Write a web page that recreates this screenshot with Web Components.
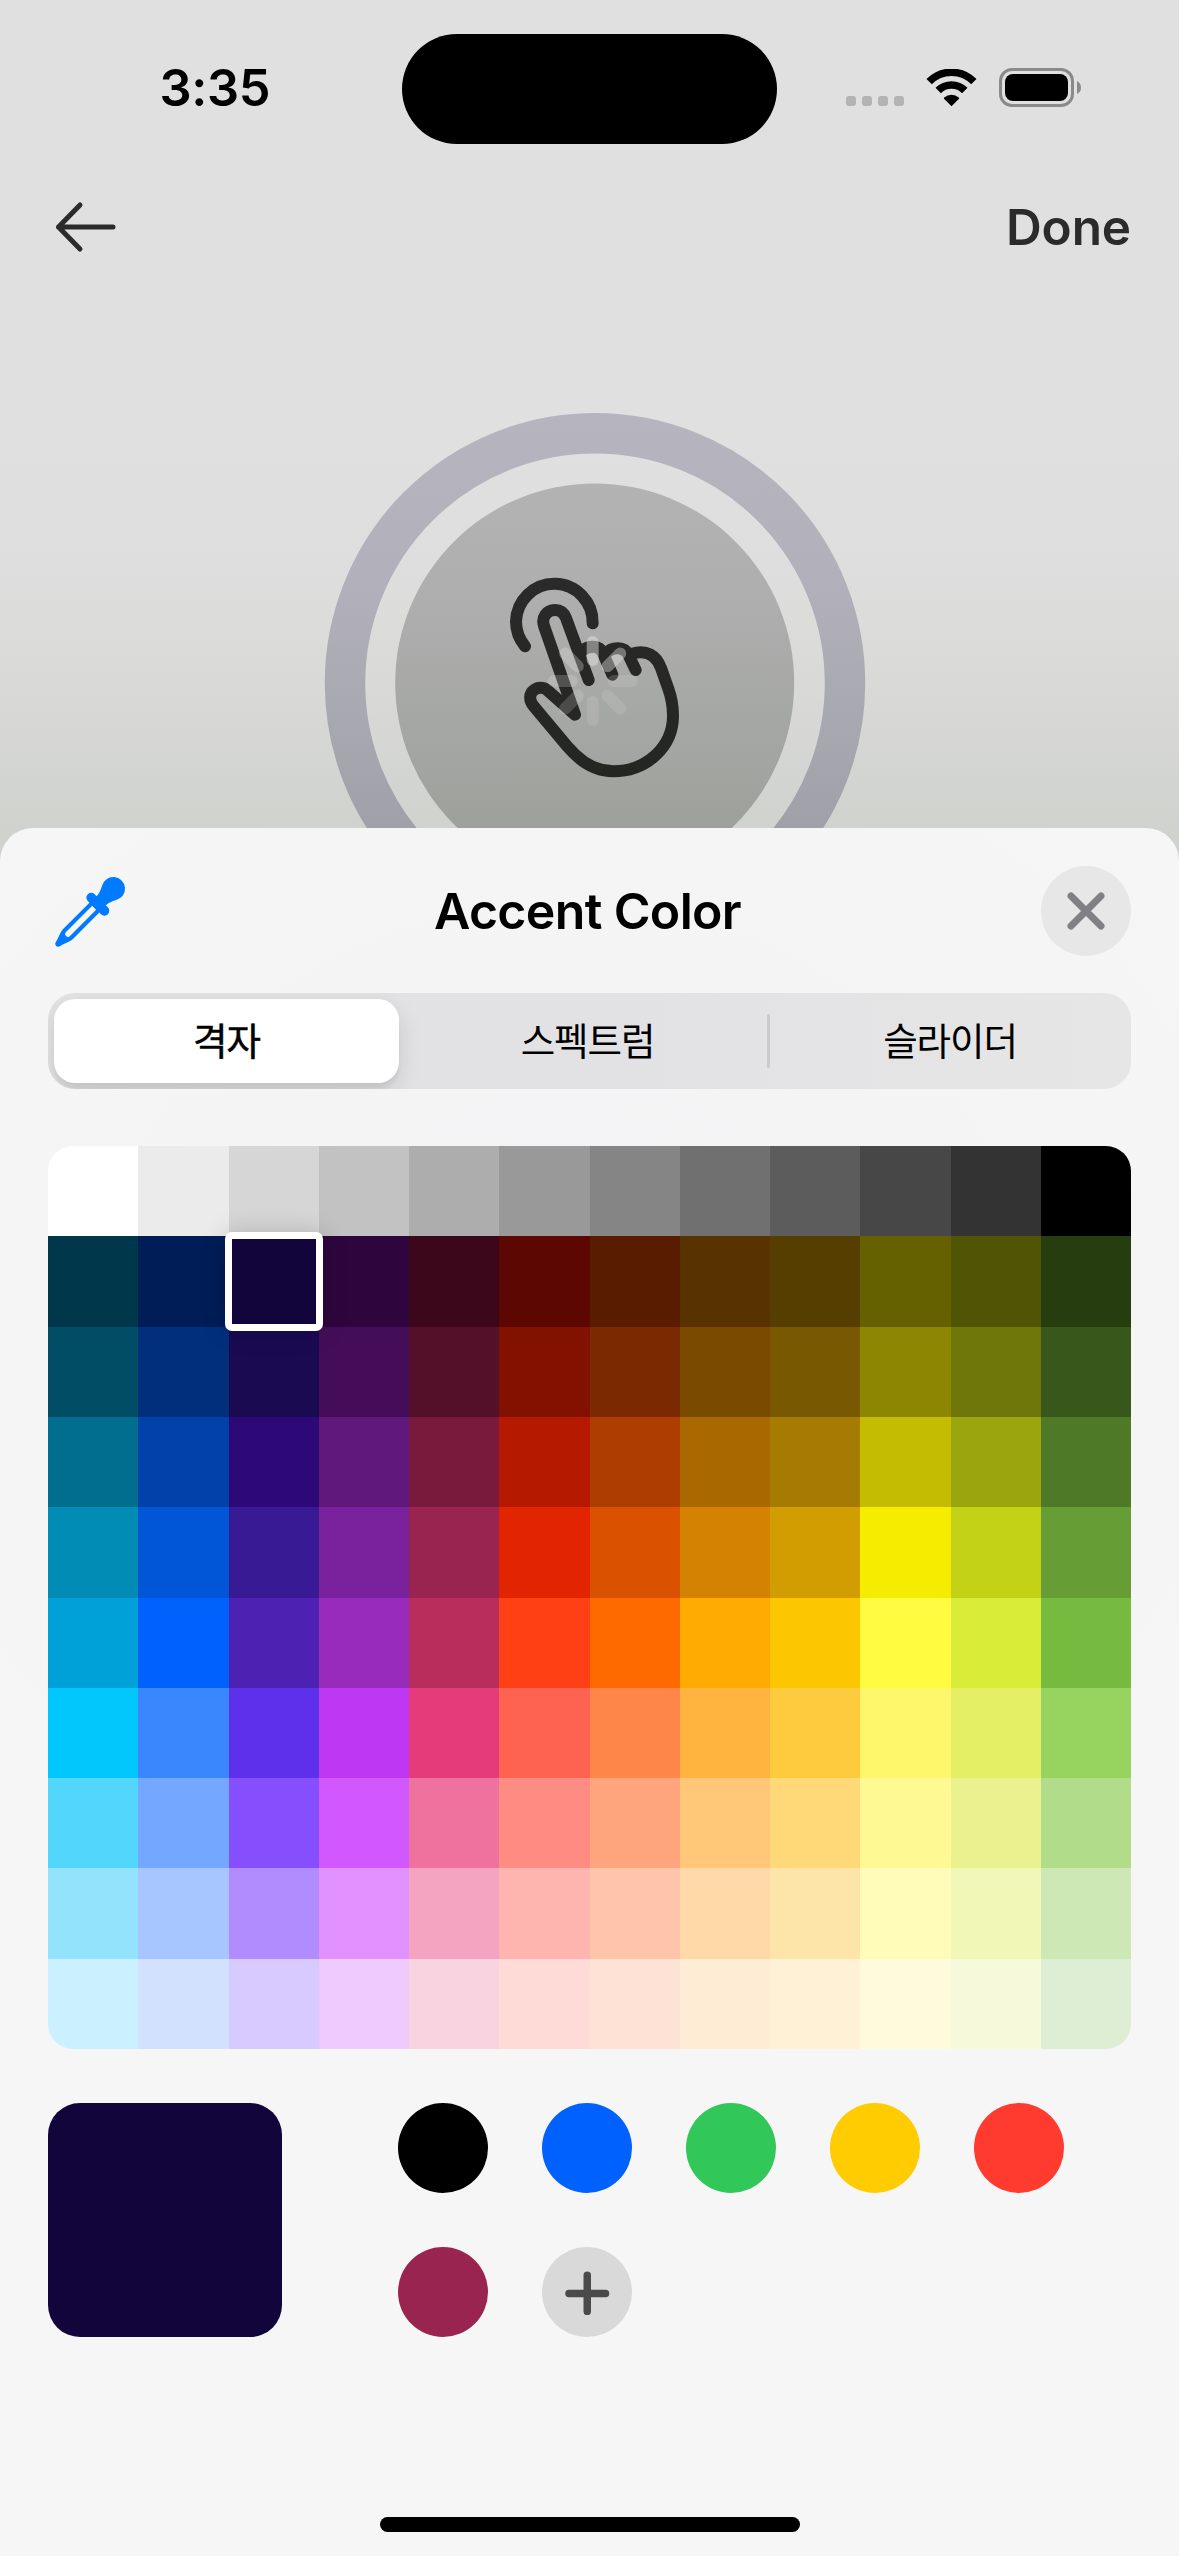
<!DOCTYPE html>
<html lang="ko">
<head>
<meta charset="utf-8">
<title>Accent Color</title>
<style>
html,body{margin:0;padding:0}
body{width:1179px;height:2556px;overflow:hidden;font-family:Inter,"Noto Sans CJK KR",sans-serif;color:#000}
</style>
</head>
<body>
<accent-screen></accent-screen>
<script>
const define = (name, markup, setup) => customElements.define(name, class extends HTMLElement {
  constructor() {
    super();
    this.attachShadow({ mode: 'open' }).innerHTML = markup;
  }
  connectedCallback() { if (setup) setup(this, this.shadowRoot); }
});

define('status-bar', `
<style>
:host{display:grid;grid-template-columns:402px 375px 402px;height:178px;box-sizing:border-box;padding-top:34px;align-items:start}
.time{font-size:50.500px;font-weight:600;line-height:60px;letter-spacing:-.4px;padding:24px 0 0 159.500px}
.island{height:110px;border-radius:55px;background:#000}
.icons{display:flex;align-items:flex-start;padding:34px 0 0 69px}
.dots{display:flex;gap:6px;padding-top:28px;margin-right:22px}
.dots i{width:10px;height:10px;border-radius:3px;background:#b3b3b3}
svg{display:block}
.wifi{margin-top:1px;margin-right:22px}
</style>
<div class="time">3:35</div>
<div class="island"></div>
<div class="icons">
  <div class="dots"><i></i><i></i><i></i><i></i></div>
  <svg class="wifi" width="51" height="38" viewBox="0 0 51 38">
    <g fill="none" stroke="#000">
      <path stroke-width="7.5" d="M3.17 12.67A31.25 31.25 0 0 1 47.83 12.67"/>
      <path stroke-width="7.7" d="M12.2 21.5A18.8 18.8 0 0 1 38.8 21.5"/>
    </g>
    <path d="M25.5 37.3L18 29.8Q17.6 29.2 18.2 28.6A11 11 0 0 1 32.8 28.6Q33.4 29.2 33 29.8Z"/>
  </svg>
  <svg width="83" height="39" viewBox="0 0 83 39">
    <rect x="1.5" y="1.5" width="72" height="36" rx="11.5" fill="none" stroke="#8a8a8a" stroke-width="3"/>
    <rect x="6" y="6" width="63" height="27" rx="8"/>
    <path d="M78 13Q82 15 82 19.5T78 26Z" fill="#8a8a8a"/>
  </svg>
</div>`);

define('nav-bar', `
<style>
:host{display:flex;justify-content:space-between;align-items:center;height:98px;padding:0 48px 0 54px;color:#2b2b2b}
.action{font-size:49.5px;font-weight:600;line-height:60px;letter-spacing:-.1px}
</style>
<svg width="64" height="54" viewBox="0 0 64 54" fill="none" stroke="#2b2b2b" stroke-width="5" stroke-linecap="round" stroke-linejoin="round"><path d="M26 5L4.500 27L26 49M4.500 27H59"/></svg>
<div class="action"><slot></slot></div>`);

define('tap-preview', `
<style>:host{display:block;flex:1;overflow:hidden}svg{display:block}</style>
<svg width="1179" height="552" viewBox="0 276 1179 552">
  <defs>
    <linearGradient id="ring" gradientUnits="userSpaceOnUse" x1="0" y1="413" x2="0" y2="828"><stop offset="0" stop-color="#b6b4bf"/><stop offset=".4" stop-color="#b2b1bb"/><stop offset="1" stop-color="#a0a1a8"/></linearGradient>
    <linearGradient id="disc" gradientUnits="userSpaceOnUse" x1="0" y1="483" x2="0" y2="828"><stop offset="0" stop-color="#b3b3b3"/><stop offset=".35" stop-color="#aeaeae"/><stop offset="1" stop-color="#9da19b"/></linearGradient>
    <linearGradient id="ink" gradientUnits="userSpaceOnUse" x1="0" y1="80" x2="0" y2="680"><stop offset="0" stop-color="#2a2a2a"/><stop offset="1" stop-color="#242622"/></linearGradient>
  </defs>
  <circle cx="595" cy="683.200" r="250" fill="none" stroke="url(#ring)" stroke-width="40.500"/>
  <circle cx="594.700" cy="683" r="199.500" fill="url(#disc)"/>
  <g transform="translate(480 550) scale(.33333)">
    <g fill="none" stroke="url(#ink)" stroke-width="36" stroke-linecap="round" stroke-linejoin="round">
      <path d="M338 220A115 116 0 0 0 108 215C108 244 118 268 135 289"/>
      <path d="M326 390L258 204C252 189 240 180 225 180C199 180 184 203 192 228L285 494L208 426C198 413 178 408 162 420C147 431 147 451 160 467L261 588C303 638 348 664 400 664C500 664 579 590 579 497C579 468 575 444 565 416L543 354C529 316 498 297 455 312"/>
      <path d="M304 304C325 286 358 284 369 310L397 374"/>
      <path d="M378 310C397 288 434 290 444 312L467 360"/>
    </g>
    <g id="petals" fill="#e0e0e0" transform="translate(338 393)"></g>
  </g>
</svg>`, (host, root) => {
  const levels = [.5, .42, .18, .17, .17, .2, .23, .3];
  root.getElementById('petals').innerHTML = levels.map((o, i) =>
    `<rect x="-18" y="-135" width="36" height="90" rx="18" opacity="${o}" transform="rotate(${i * 45})"/>`).join('');
});

define('sheet-header', `
<style>
:host{display:grid;grid-template-columns:90px 1fr 90px;align-items:center;height:90px}
svg{display:block}
h1{margin:0;padding-right:4px;text-align:center;font-size:50px;font-weight:600;line-height:60px;letter-spacing:-.65px}
.close{width:90px;height:90px;border-radius:50%;background:#e7e7e7;display:grid;place-items:center}
</style>
<svg width="80" height="72" viewBox="-7 0 80 72" fill="#007aff">
  <g transform="translate(1 71) rotate(45)">
    <path fill-rule="evenodd" d="M-7-55V-17C-7-13-3.600-7-3-3Q-2.600-.5 0 0Q2.600-.5 3-3C3.600-7 7-13 7-17V-55ZM-2.800-54V-17A2.800 2.800 0 0 0 2.800-17V-54Z"/>
    <rect x="-14.200" y="-64" width="28.400" height="9.700" rx="4.850"/>
    <path d="M-6.500-60C-6.200-68-8-71-10-75A11.700 11.700 0 1 1 10-75C8-71 6.200-68 6.500-60Z"/>
  </g>
</svg>
<h1><slot></slot></h1>
<div class="close"><svg width="40" height="40" viewBox="0 0 40 40" stroke="#808085" stroke-width="7" stroke-linecap="round"><path d="M5 5L35 35M35 5L5 35"/></svg></div>`);

define('segment-tab', `
<style>
:host{display:flex;flex:1;box-sizing:border-box;align-items:center;justify-content:center;height:84px;padding-bottom:5px;font-family:"Noto Sans CJK KR",sans-serif;font-size:37.500px;letter-spacing:-1.100px;line-height:50px}
:host([selected]){flex:0 0 345px;background:#fff;border-radius:21px;box-shadow:0 9px 24px rgba(0,0,0,.12),0 6px 3px rgba(0,0,0,.04);-webkit-text-stroke:.5px #000}
</style><slot></slot>`);

define('segmented-control', `
<style>
:host{display:flex;align-items:center;box-sizing:border-box;height:96px;padding:6px;border-radius:27px;background:linear-gradient(90deg,#e3e3e3,#e2e2e5 50%,#e6e6e6);overflow:hidden}
.middle{flex:0 0 369px;padding-left:8px}
.last{padding-left:5px}
.bar{width:3px;height:54px;border-radius:2px;background:#cbcbcd;margin-left:-1px}
</style>
<segment-tab selected>격자</segment-tab>
<segment-tab class="middle">스펙트럼</segment-tab>
<div class="bar"></div>
<segment-tab class="last">슬라이더</segment-tab>`);

define('color-grid', `
<style>
:host{display:block;position:relative;height:903px}
.cells{display:grid;grid-template-columns:repeat(12,1fr);grid-template-rows:repeat(10,1fr);width:100%;height:100%;border-radius:25px;overflow:hidden}
.pick{position:absolute;left:177px;top:86px;width:98px;height:99px;box-sizing:border-box;border:7.500px solid #fff;border-radius:7px;box-shadow:0 0 24px rgba(0,0,0,.17)}
</style>
<div class="cells"></div><div class="pick"></div>`, (host, root) => {
  const rows = [
    'FFFFFF EBEBEB D6D6D6 C2C2C2 ADADAD 999999 858585 707070 5C5C5C 474747 333333 000000',
    '00374A 011D57 11053B 2E063D 3C071B 5C0701 5A1C00 583300 563D00 666100 4F5504 263E0F',
    '004D65 012F7B 1A0A52 450D59 551029 831100 7B2900 7A4A00 785800 8D8602 6F760A 38571A',
    '016E8F 0042A9 2C0977 61187C 791A3D B51A00 AD3E00 A96800 A67B01 C4BC00 9BA50E 4E7A27',
    '008CB4 0056D6 371A94 7A219E 99244F E22400 DA5100 D38301 D19D01 F5EC00 C3D117 669D34',
    '00A1D8 0061FD 4D22B2 982ABC B92D5D FF4015 FF6A00 FFAB01 FCC700 FEFB41 D9EC37 76BB40',
    '01C7FC 3A87FD 5E30EB BE38F3 E63B7A FE6250 FE8648 FEB43F FECB3E FFF76B E4EF65 96D35F',
    '52D6FC 74A7FF 864FFD D357FE EE719E FF8C82 FFA57D FFC777 FFD977 FFF994 EAF28F B1DD8B',
    '93E3FC A7C6FF B18CFE E292FE F4A4C0 FFB5AF FFC5AB FFD9A8 FDE4A8 FFFBB9 F1F7B7 CDE8B5',
    'CBF0FF D2E2FE D8C9FE EFCAFE F9D3E0 FFDBD8 FFE2D6 FFECD4 FEF1D5 FEFBDD F6FADB DEEED4'];
  root.querySelector('.cells').innerHTML = rows.join(' ').split(' ').map(c => `<i style="background:#${c}"></i>`).join('');
});

define('saved-colors', `
<style>
:host{display:flex;gap:116px;align-items:flex-start}
.current{width:234px;height:234px;border-radius:32px;background:#11053b}
.list{display:grid;grid-template-columns:repeat(5,90px);gap:54px}
.list>*{width:90px;height:90px;border-radius:50%}
.add{background:#d9d9d9;display:grid;place-items:center}
svg{display:block}
</style>
<div class="current"></div>
<div class="list">
  <i style="background:#000"></i><i style="background:#0061fe"></i><i style="background:#32c759"></i><i style="background:#ffcc02"></i><i style="background:#ff3b30"></i><i style="background:#99244f"></i>
  <div class="add"><svg width="46" height="46" viewBox="0 0 46 46" stroke="#4a4a4a" stroke-width="7.500" stroke-linecap="round"><path d="M5 24.500H41.500M23.250 6.250V42.500"/></svg></div>
</div>`);

define('color-sheet', `
<style>
:host{display:flex;flex-direction:column;box-sizing:border-box;height:1728px;padding:38px 48px 24px;border-radius:33px 33px 0 0;background:radial-gradient(ellipse 75% 45% at 48% 28%,#f3f3f5,#f6f6f6)}
segmented-control{margin-top:37px}
color-grid{margin-top:57px}
saved-colors{margin-top:54px}
.home{width:420px;height:15px;border-radius:8px;background:#000;margin:auto auto 0}
</style>
<sheet-header>Accent Color</sheet-header>
<segmented-control></segmented-control>
<color-grid></color-grid>
<saved-colors></saved-colors>
<div class="home"></div>`);

define('accent-screen', `
<style>
:host{display:flex;flex-direction:column;width:1179px;height:2556px;background:linear-gradient(180deg,#e0e0e0 0,#e0e0e0 440px,#dedede 560px,#dcdcdb 620px,#d8d9d7 700px,#d0d2ce 828px,#cfd1cd 900px)}
</style>
<status-bar></status-bar>
<nav-bar>Done</nav-bar>
<tap-preview></tap-preview>
<color-sheet></color-sheet>`);
</script>
</body>
</html>
